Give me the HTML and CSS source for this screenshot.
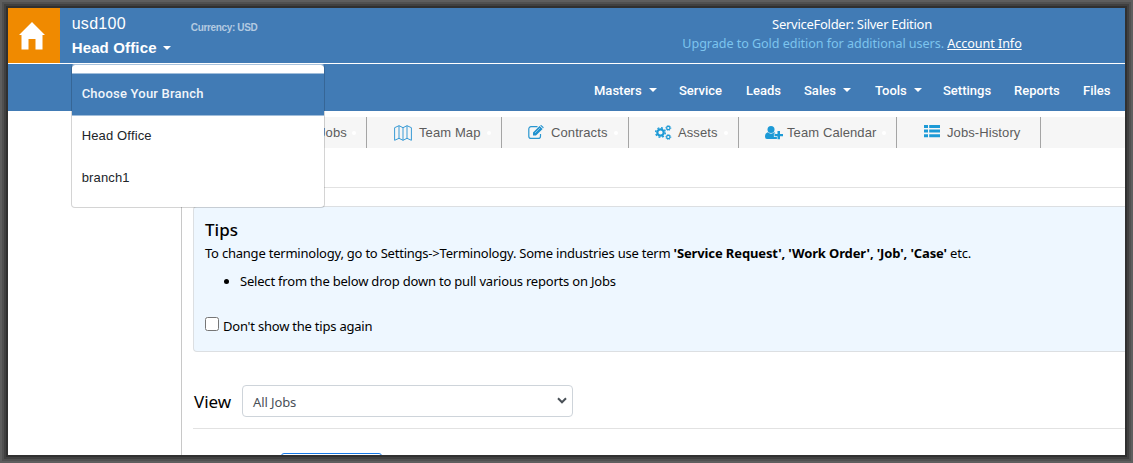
FILE: index.html
```html
<!DOCTYPE html>
<html lang="en">
<head>
<meta charset="utf-8">
<title>ServiceFolder</title>
<link rel="stylesheet" href="styles.css">
</head>
<body>
<div class="ring ring-a"><div class="ring ring-b"><div class="ring ring-c"><div class="ring ring-d">
<div class="app">
  <header class="topbar">
    <a class="home"><svg width="26" height="28" viewBox="0 0 26 28"><path fill="#fff" d="M13 0 0 13h2.500v14.500h7V17h7v10.500h7V13H26z"/></svg></a>
    <div class="account">
      <div class="company">usd100</div>
      <div class="branch">Head Office <i class="caret"></i></div>
      <div class="menu">
        <div class="menu-head">Choose Your Branch</div>
        <div class="menu-item">Head Office</div>
        <div class="menu-item">branch1</div>
      </div>
    </div>
    <div class="currency">Currency: USD</div>
    <div class="edition">
      <div class="ed-name">ServiceFolder: Silver Edition</div>
      <div class="ed-up"><span class="up">Upgrade to Gold edition for additional users.</span> <a class="info">Account Info</a></div>
    </div>
  </header>
  <nav class="nav">
    <a class="n1">Masters<i class="caret"></i></a><a class="n2">Service</a><a class="n3">Leads</a><a class="n4">Sales<i class="caret"></i></a><a class="n5">Tools<i class="caret"></i></a><a class="n6">Settings</a><a class="n7">Reports</a><a class="n8">Files</a>
  </nav>
  <div class="body">
    <aside class="side"></aside>
    <main class="main">
      <div class="tabs">
        <a class="tab t1"><span>Jobs</span><i class="dot"></i></a>
        <a class="tab t2"><svg width="18" height="16" viewBox="0 0 18 16" fill="none" stroke="#3a9bd5"><path d="M.6 2.700 5 .7l4 2 4-2 4.400 2v12.600l-4.400-2-4 2-4-2-4.400 2zM5 .7v12.600M9 2.700v12.600M13 .7v12.600"/></svg><span>Team Map</span><i class="dot"></i></a>
        <a class="tab t3"><svg width="16" height="15" viewBox="0 0 16 15"><path d="M9.500 1.700H3A2.200 2.200 0 0 0 .8 3.900v7.300a2.200 2.200 0 0 0 2.200 2.200h7.300a2.200 2.200 0 0 0 2.200-2.200V9" fill="none" stroke="#2a97d0" stroke-width="1.200"/><path fill="#2192cf" d="m5 7.600 6.600-6.600 3 3L8 10.600H5zM12.200.5l.3-.3q.5-.4 1 0L15.400 2q.5.500 0 1l-.3.300z"/><path d="m7 8 5-5" stroke="#bfe2f5" stroke-width=".6"/></svg><span>Contracts</span><i class="dot"></i></a>
        <a class="tab t4"><svg width="17" height="15" viewBox="0 0 17 15" fill="none" stroke="#1d9ad6"><circle cx="5.500" cy="7.500" r="3.200" stroke-width="2.200"/><circle cx="5.500" cy="7.500" r="4.800" stroke-width="1.500" stroke-dasharray="1.900 1.870"/><circle cx="13.300" cy="3" r="1.700" stroke-width="1.200"/><circle cx="13.300" cy="3" r="2.500" stroke-width=".9" stroke-dasharray="1 .96"/><circle cx="13.300" cy="12" r="1.700" stroke-width="1.200"/><circle cx="13.300" cy="12" r="2.500" stroke-width=".9" stroke-dasharray="1 .96"/></svg><span>Assets</span><i class="dot"></i></a>
        <a class="tab t5"><svg width="18" height="14" viewBox="0 0 18 14" fill="#1d9ad6"><circle cx="6" cy="3.600" r="3.500"/><path d="M2.700 6.300Q6 9 9.300 6.300l1 .7v3.800h2V13H2q-2 0-2-2.300 0-3.400 2.700-4.400z"/><path d="M12.500 5H15v3h3v2.300h-3v3h-2.500v-3h-3V8h3z" stroke="#f7f7f7" stroke-width="1.200" paint-order="stroke"/></svg><span>Team Calendar</span><i class="dot"></i></a>
        <a class="tab t6"><svg width="16" height="13" viewBox="0 0 16 13" fill="#1d9ad6"><path d="M0 0h4v3H0zM5.200 0H16v3H5.200zM0 4.600h4v3H0zM5.200 4.600H16v3H5.200zM0 9.200h4v3H0zM5.200 9.200H16v3H5.200z"/></svg><span>Jobs-History</span></a>
      </div>
      <div class="content">
        <div class="rule"></div>
        <section class="tips">
          <h2>Tips</h2>
          <p>To change terminology, go to Settings-&gt;Terminology. Some industries use term <b>'Service Request', 'Work Order', 'Job', 'Case'</b> etc.</p>
          <ul><li>Select from the below drop down to pull various reports on Jobs</li></ul>
          <label><input type="checkbox"><span>Don't show the tips again</span></label>
        </section>
        <div class="view">
          <span class="view-label">View</span>
          <div class="select"><span>All Jobs</span><svg width="10" height="7" viewBox="0 0 10 7"><path d="m1 1.300 4 4 4-4" fill="none" stroke="#495057" stroke-width="2"/></svg></div>
        </div>
        <div class="rule second"></div>
        <div class="button"></div>
      </div>
    </main>
  </div>
</div>
</div></div></div></div>
</body>
</html>
```
FILE: styles.css
```css
* { box-sizing: border-box; }
body { margin: 0; overflow: hidden; font-family: "Noto Sans", sans-serif; font-size: 13px; color: #000; }
.ring { border: 2px solid; height: 100%; }
.ring-a { height: 463px; border-color: #5e5e5e; }
.ring-b { border-color: #505050; }
.ring-c { border-color: #404040; }
.ring-d { border-color: #303030; }
.app { height: 447px; background: #fff; overflow: hidden; display: flex; flex-direction: column; }

.topbar { height: 56px; flex: none; background: #417bb5; border-bottom: 1px solid #fff; display: flex; color: #fff; }
.home { width: 52px; background: #f08a00; display: flex; align-items: center; justify-content: center; padding: 0 4px 0 0; }
.account { position: relative; width: 120px; margin-left: 11px; font-family: "Liberation Sans", sans-serif; }
.company { font-size: 16px; line-height: 20px; margin-top: 6px; padding-left: 1px; letter-spacing: .3px; }
.branch { font-size: 15px; line-height: 20px; margin-top: 4px; padding-left: 1px; font-weight: bold; white-space: nowrap; letter-spacing: .15px; }
.caret { display: inline-block; border: 4px solid transparent; border-top-color: #fff; border-bottom: 0; margin-left: 7px; vertical-align: 3px; }
.branch .caret { margin-left: 2px; }
.currency { font: bold 10px/14px "Liberation Sans", sans-serif; letter-spacing: -.35px; color: #b3cae1; width: 380px; padding: 13px 0 0 1px; }
.edition { width: 562px; text-align: center; line-height: 19px; padding: 7px 0 0 12px; white-space: nowrap; }
.ed-name { letter-spacing: -.28px; }
.ed-up { font-size: 12.600px; letter-spacing: -.06px; }
.up { color: #7cc4ee; }
.info { text-decoration: underline; }

.menu { position: absolute; z-index: 2; left: 0; top: 56px; width: 254px; height: 144px; padding-top: 8px; background: #fff; border: 1px solid #d2d2d2; border-color: rgba(0, 0, 0, .17); border-radius: 4px; background-clip: padding-box; color: #212529; font: 13px "Liberation Sans", sans-serif; border-top-color: #a9c3dd; overflow: hidden; }
.menu-head, .menu-item { height: 42px; line-height: 41px; padding-left: 10px; letter-spacing: .15px; }
.menu-head { height: 43px; line-height: 40px; margin-bottom: -1px; background: #417bb5; color: #f0f5fa; font-family: "Roboto", sans-serif; font-weight: 500; letter-spacing: .22px; border-top: 1px solid #a0bdda; border-bottom: 1px solid #a0bdda; }

.nav { height: 47px; flex: none; background: #417bb5; display: flex; padding-left: 586px; color: #fff; font: 500 13px/53px "Roboto", sans-serif; }
.nav a { white-space: nowrap; flex: none; }
.nav .caret { vertical-align: 3px; }
.n1 { width: 85px; } .n2 { width: 67px; } .n3 { width: 58px; } .n4 { width: 71px; }
.n5 { width: 68px; } .n6 { width: 71px; } .n7 { width: 69px; }

.body { flex: 1; display: flex; }
.side { width: 174px; border-right: 1px solid #c8c8c8; }
.main { flex: 1; padding-top: 6px; min-width: 0; }
.tabs { height: 31px; background: #f6f6f6; display: flex; color: #5c5c5c; font: 13px "Liberation Sans", sans-serif; letter-spacing: .1px; }
.tab { position: relative; display: flex; align-items: center; border-right: 1px solid #a5a5a5; height: 31px; white-space: nowrap; }
.tab svg { flex: none; }
.dot { position: absolute; right: 10px; top: 14px; width: 4px; height: 4px; border-radius: 2px; background: #fff; }
.t1 { width: 185px; padding-left: 137px; }
.t2 { width: 135px; padding-left: 27px; gap: 7px; }
.t3 { width: 127px; padding-left: 26px; gap: 7px; }
.t4 { width: 110px; padding-left: 26px; gap: 6px; }
.t5 { width: 158px; padding-left: 26px; gap: 4px; }
.t6 svg { margin-top: -2px; }
.t6 { width: 144px; padding-left: 27px; gap: 7px; }

.content { padding: 39px 0 0 11px; }
.rule { height: 1px; background: #e2e2e2; }
.tips { margin-top: 18px; height: 146px; background: #eef7ff; border: 1px solid #dcdfe2; border-right: 0; border-radius: 4px 0 0 4px; padding: 12px 0 0 11px; white-space: nowrap; letter-spacing: -.22px; }
.tips b { letter-spacing: -.12px; }
.tips h2 { margin: 0; font-size: 17px; font-weight: 500; line-height: 22px; letter-spacing: 0; }
.tips p { margin: 2px 0 0; line-height: 20px; }
.tips ul { margin: 8px 0 0; padding-left: 35px; line-height: 20px; letter-spacing: -.2px; }
.tips label { display: flex; margin-top: 25px; line-height: 20px; }
.tips input { width: 14px; height: 14px; margin: 1px 4px 0 0; }
.view { display: flex; align-items: center; height: 32px; margin-top: 33px; }
.view-label { width: 49px; font-size: 17px; padding-left: 1px; }
.select { width: 331px; height: 32px; border: 1px solid #ced4da; border-radius: 4px; display: flex; align-items: center; justify-content: space-between; padding: 2px 5px 0 10px; color: #495057; letter-spacing: -.1px; }
.select svg { margin-bottom: 3px; }
.second { margin-top: 11px; }
.button { margin: 24px 0 0 88px; width: 101px; height: 30px; border: 1px solid #1679e8; border-radius: 3px; }
```
